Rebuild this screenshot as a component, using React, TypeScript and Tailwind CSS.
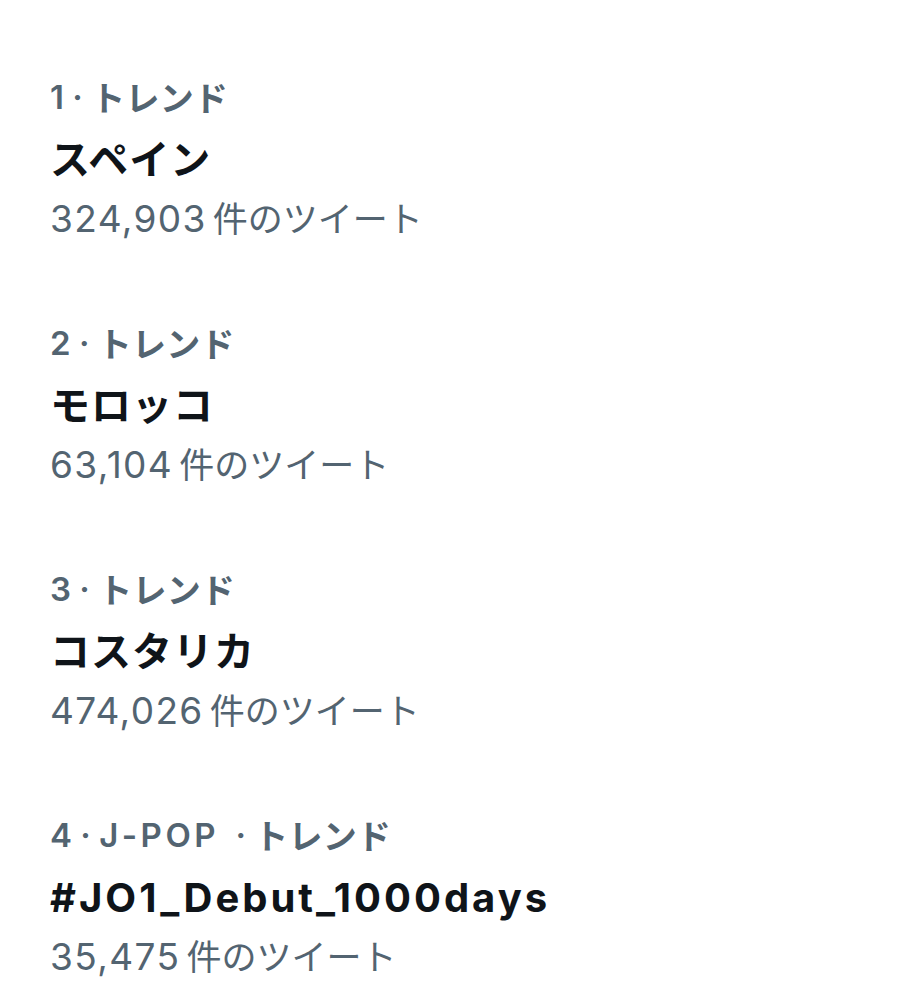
const trends = [
  { rank: "1", category: "", title: "スペイン", latin: false, count: "324,903" },
  { rank: "2", category: "", title: "モロッコ", latin: false, count: "63,104" },
  { rank: "3", category: "", title: "コスタリカ", latin: false, count: "474,026" },
  { rank: "4", category: "J-POP", title: "#JO1_Debut_1000days", latin: true, count: "35,475" },
];

const App = () => {
  return (
    <div
      className="min-h-[984px] w-[910px] bg-white pl-[50px] pt-[66px] antialiased"
      style={{ fontFamily: 'Inter, "Noto Sans CJK JP", sans-serif' }}
    >
      <div className="flex flex-col gap-[64px]">
        {trends.map((t) => (
          <div key={t.title} className="flex flex-col">
            <div className="flex h-[64px] items-center whitespace-pre text-[33px] font-semibold text-[#536471]">
              <span>{t.rank} · </span>
              {t.category ? (
                <>
                  <span className="tracking-[3.5px]">{t.category}</span>
                  <span className="pl-[8px]"> · </span>
                </>
              ) : null}
              <span className="text-[34px] tracking-[0.3px]">トレンド</span>
            </div>
            <div
              className={`flex h-[60px] items-center text-[40px] font-bold text-[#0f1419] ${
                t.latin ? "tracking-[3px]" : "tracking-[1px]"
              }`}
            >
              {t.title}
            </div>
            <div className="flex h-[58px] items-center text-[#536471]">
              <span className="text-[37px] tracking-[1.4px]">{t.count}</span>
              <span className="ml-[6px] text-[35px]">件のツイート</span>
            </div>
          </div>
        ))}
      </div>
    </div>
  );
};

export default App;
